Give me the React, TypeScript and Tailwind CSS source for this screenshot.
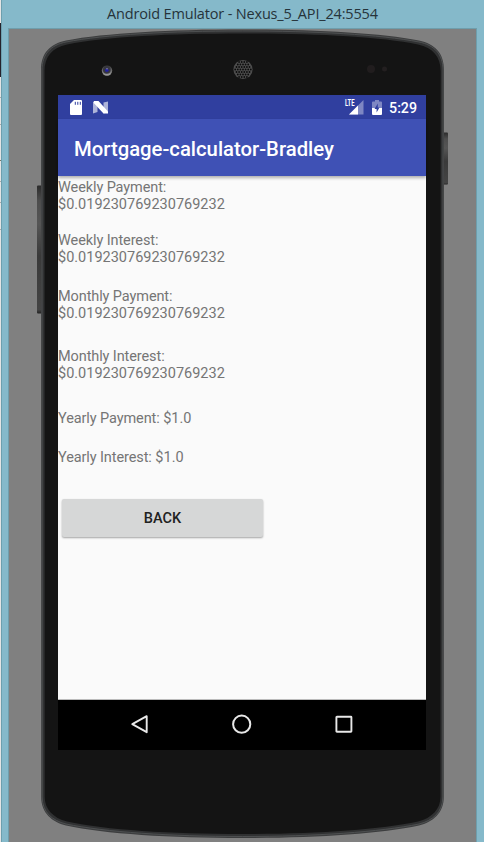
import React from "react";

type Result = { label: string; value: string; inline?: boolean; gap: string };

const results: Result[] = [
  { label: "Weekly Payment:", value: "$0.019230769230769232", gap: "pt-[4px] h-[57px]" },
  { label: "Weekly Interest:", value: "$0.019230769230769232", gap: "h-[56px]" },
  { label: "Monthly Payment:", value: "$0.019230769230769232", gap: "h-[60px]" },
  { label: "Monthly Interest:", value: "$0.019230769230769232", gap: "h-[62px]" },
  { label: "Yearly Payment:", value: "$1.0", inline: true, gap: "h-[39px]" },
  { label: "Yearly Interest:", value: "$1.0", inline: true, gap: "h-[49px]" },
];

function PhoneBody() {
  const dots: React.ReactNode[] = [];
  for (let r = -3; r <= 3; r++) {
    for (let c = -4; c <= 4; c++) {
      const x = c * 2.6 + (r % 2 ? 1.3 : 0);
      const y = r * 2.5;
      if (x * x + y * y < 76) dots.push(<circle key={`${r}:${c}`} cx={243 + x} cy={69.5 + y} r={0.9} fill="#0c0c0c" />);
    }
  }
  return (
    <svg className="absolute left-0 top-0" width="484" height="842" viewBox="0 0 484 842">
      <defs>
        <linearGradient id="key" x1="0" y1="0" x2="0" y2="1">
          <stop offset="0" stopColor="#2b2b2b" />
          <stop offset="0.12" stopColor="#4d4d4d" />
          <stop offset="0.3" stopColor="#555" />
          <stop offset="0.55" stopColor="#3a3a3a" />
          <stop offset="0.97" stopColor="#444" />
          <stop offset="1" stopColor="#222" />
        </linearGradient>
        <linearGradient id="lens" x1="0" y1="0" x2="0" y2="1">
          <stop offset="0" stopColor="#303030" />
          <stop offset="1" stopColor="#a5a5a5" />
        </linearGradient>
      </defs>
      <rect x="37" y="185.500" width="5" height="128" rx="1" fill="url(#key)" />
      <rect x="443" y="132.500" width="5" height="52" rx="1" fill="url(#key)" />
      <path
        d="M41 70C41 53 50 44 66 40.500C105 33 170 29.500 242.500 29.500C315 29.500 380 33 419 40.500C435 44 444 53 444 70L443.800 797C443.800 813 433 822 419 825.500C380 834 315 838 242.500 838C170 838 105 834 66 825.500C52 822 41.200 813 41.200 797Z"
        fill="#3c3d3e"
      />
      <path
        d="M42 70C42 54 51 45 66 42C105 34.500 170 31 242.500 31C315 31 380 34.500 419 42C434 45 443 54 443 70L442.800 797C442.800 812 433 820.500 419 824C380 832 315 836.500 242.500 836.500C170 836.500 105 832 66 824C52 820.500 42.200 812 42.200 797Z"
        fill="#303132"
        stroke="#505254"
        strokeWidth="0.9"
      />
      <path
        d="M44.500 71C44.500 57 52 47.500 67 44.500C106 36.500 170 33.500 242.500 33.500C315 33.500 379 36.500 418 44.500C433 47.500 440.700 57 440.700 71L440.500 797C440.500 809 432 818 418 821.500C379 830 315 834 242.500 834C170 834 106 830 67 821.500C53 818 44.700 809 44.700 797Z"
        fill="#141414"
      />
      <circle cx="107" cy="70.500" r="5.200" fill="url(#lens)" />
      <circle cx="106.800" cy="70" r="3.800" fill="#36363f" />
      <circle cx="106.800" cy="70.300" r="1.800" fill="#2020a0" />
      <circle cx="107" cy="68.800" r="0.700" fill="#9797b8" />
      <circle cx="243" cy="69.500" r="9.600" fill="#4d4d4d" />
      {dots}
      <circle cx="371" cy="69" r="4" fill="#211d1e" />
      <circle cx="384.500" cy="69" r="2.500" fill="#231f20" />
    </svg>
  );
}

function StatusBar() {
  return (
    <div className="flex h-6 shrink-0 items-center bg-[#303f9f] pl-3 pr-[9px] text-white">
      <svg width="12" height="15" viewBox="0 0 12 15">
        <path d="M4 0h7a1 1 0 0 1 1 1v13a1 1 0 0 1-1 1H1a1 1 0 0 1-1-1V4Z" fill="#fff" />
        <path d="M5.300 1.800v3M7.800 1.800v3M10.300 1.800v3" stroke="#303f9f" strokeWidth="1" />
      </svg>
      <svg className="ml-[11px]" width="15" height="13" viewBox="0 0 15 13">
        <path d="M0 1.500L4.500 0V11L0 12.500ZM10.500 1.500L15 .5V11L10.500 12.500Z" fill="#aeb4d9" />
        <path d="M1 0H5.500L15 10.500V12.500H10.500L.3 1.500Z" fill="#fff" />
      </svg>
      <div className="ml-auto flex items-center">
        <svg width="20" height="16" viewBox="0 0 20 16">
          <path d="M19.500 1V15.500H5Z" fill="#7e87c3" />
          <path d="M14 6.500V15.500H5Z" fill="#fff" />
          <text x="1" y="7.400" fontFamily="Roboto, sans-serif" fontSize="9" fontWeight="700" textLength="9.500" lengthAdjust="spacingAndGlyphs" fill="#fff">LTE</text>
        </svg>
        <svg className="ml-2" width="10" height="15" viewBox="0 0 10 15">
          <path d="M3 0h4v1.500h2a1 1 0 0 1 1 1V8H0V2.500a1 1 0 0 1 1-1h2Z" fill="#7e87c3" />
          <path d="M0 8h10v6a1 1 0 0 1-1 1H1a1 1 0 0 1-1-1Z" fill="#fff" />
          <path d="M5.800 3.500L2.500 9H4.600V12.500L7.500 7.500H5.800Z" fill="#303f9f" />
        </svg>
        <span className="ml-[7px] pt-[2px] text-[14.2px] font-medium leading-[22px]">5:29</span>
      </div>
    </div>
  );
}

function NavBar() {
  return (
    <div className="flex h-[50px] shrink-0 items-center justify-between bg-black px-[72px]">
      <svg className="overflow-visible" width="20" height="20" viewBox="0 0 20 20" fill="none" stroke="#e8e8e8" strokeWidth="1.900">
        <path d="M16.700 1.200V17.200L2.300 9.200Z" strokeLinejoin="round" />
      </svg>
      <svg className="overflow-visible" width="20" height="20" viewBox="0 0 20 20" fill="none" stroke="#e8e8e8" strokeWidth="2">
        <circle cx="9.700" cy="9.200" r="8.600" />
      </svg>
      <svg className="overflow-visible" width="20" height="20" viewBox="0 0 20 20" fill="none" stroke="#e8e8e8" strokeWidth="1.900">
        <rect x="2.400" y="1.700" width="15" height="15" rx="0.500" />
      </svg>
    </div>
  );
}

export default function App() {
  return (
    <div className="flex h-[842px] w-[484px] overflow-hidden bg-[#85b9ca]">
      <div className="flex w-[2px] shrink-0 flex-col border-r border-[#6d9fae] bg-[#e4e4e4]">
        <div className="mt-[23px] h-[54px] bg-[#25222b]" />
        <div className="mt-5 h-px bg-[#aaa]" />
        <div className="mt-[26px] h-px bg-[#aaa]" />
        <div className="mt-[35px] h-px bg-[#776]" />
        <div className="mt-5 h-px bg-[#aaa]" />
        <div className="mt-5 h-px bg-[#aaa]" />
        <div className="mt-[26px] h-px bg-[#aaa]" />
      </div>
      <div className="flex min-w-0 grow flex-col pl-[6px] pr-[7px]">
        <header className="h-7 shrink-0 whitespace-nowrap pl-[99px] font-['Open_Sans',sans-serif] text-[14.5px] leading-[28px] tracking-[-0.17px] text-[#26333a]">
          Android Emulator - Nexus_5_API_24:5554
        </header>
        <main className="grow border border-b-0 border-[#6f9eac] bg-[#808080] pl-[49px] pt-[66px]">
          <PhoneBody />
          <section className="relative flex h-[655px] w-[368px] flex-col bg-[#fafafa] font-[Roboto,sans-serif]">
            <StatusBar />
            <h1 className="z-10 flex h-[57px] shrink-0 items-center bg-[#3f51b5] px-4 pt-[3px] text-[20.3px] font-medium text-white shadow-[0_2px_3px_rgba(0,0,0,0.3)]">
              Mortgage-calculator-Bradley
            </h1>
            <div className="grow border-b border-[#bbb] text-[14.5px] leading-[16.5px] text-[#757575]">
              {results.map((r) => (
                <p key={r.label} className={r.gap}>
                  <span className="tracking-[-0.1px]">{r.label}</span>
                  {r.inline ? " " : <br />}
                  {r.value}
                </p>
              ))}
              <button className="ml-1 block h-[38px] w-[201px] rounded-[2px] bg-[#d6d7d7] pt-[2px] text-[14.5px] font-medium text-[#212121] shadow-[0_1px_2px_rgba(0,0,0,0.35)]">
                BACK
              </button>
            </div>
            <NavBar />
          </section>
        </main>
      </div>
    </div>
  );
}
